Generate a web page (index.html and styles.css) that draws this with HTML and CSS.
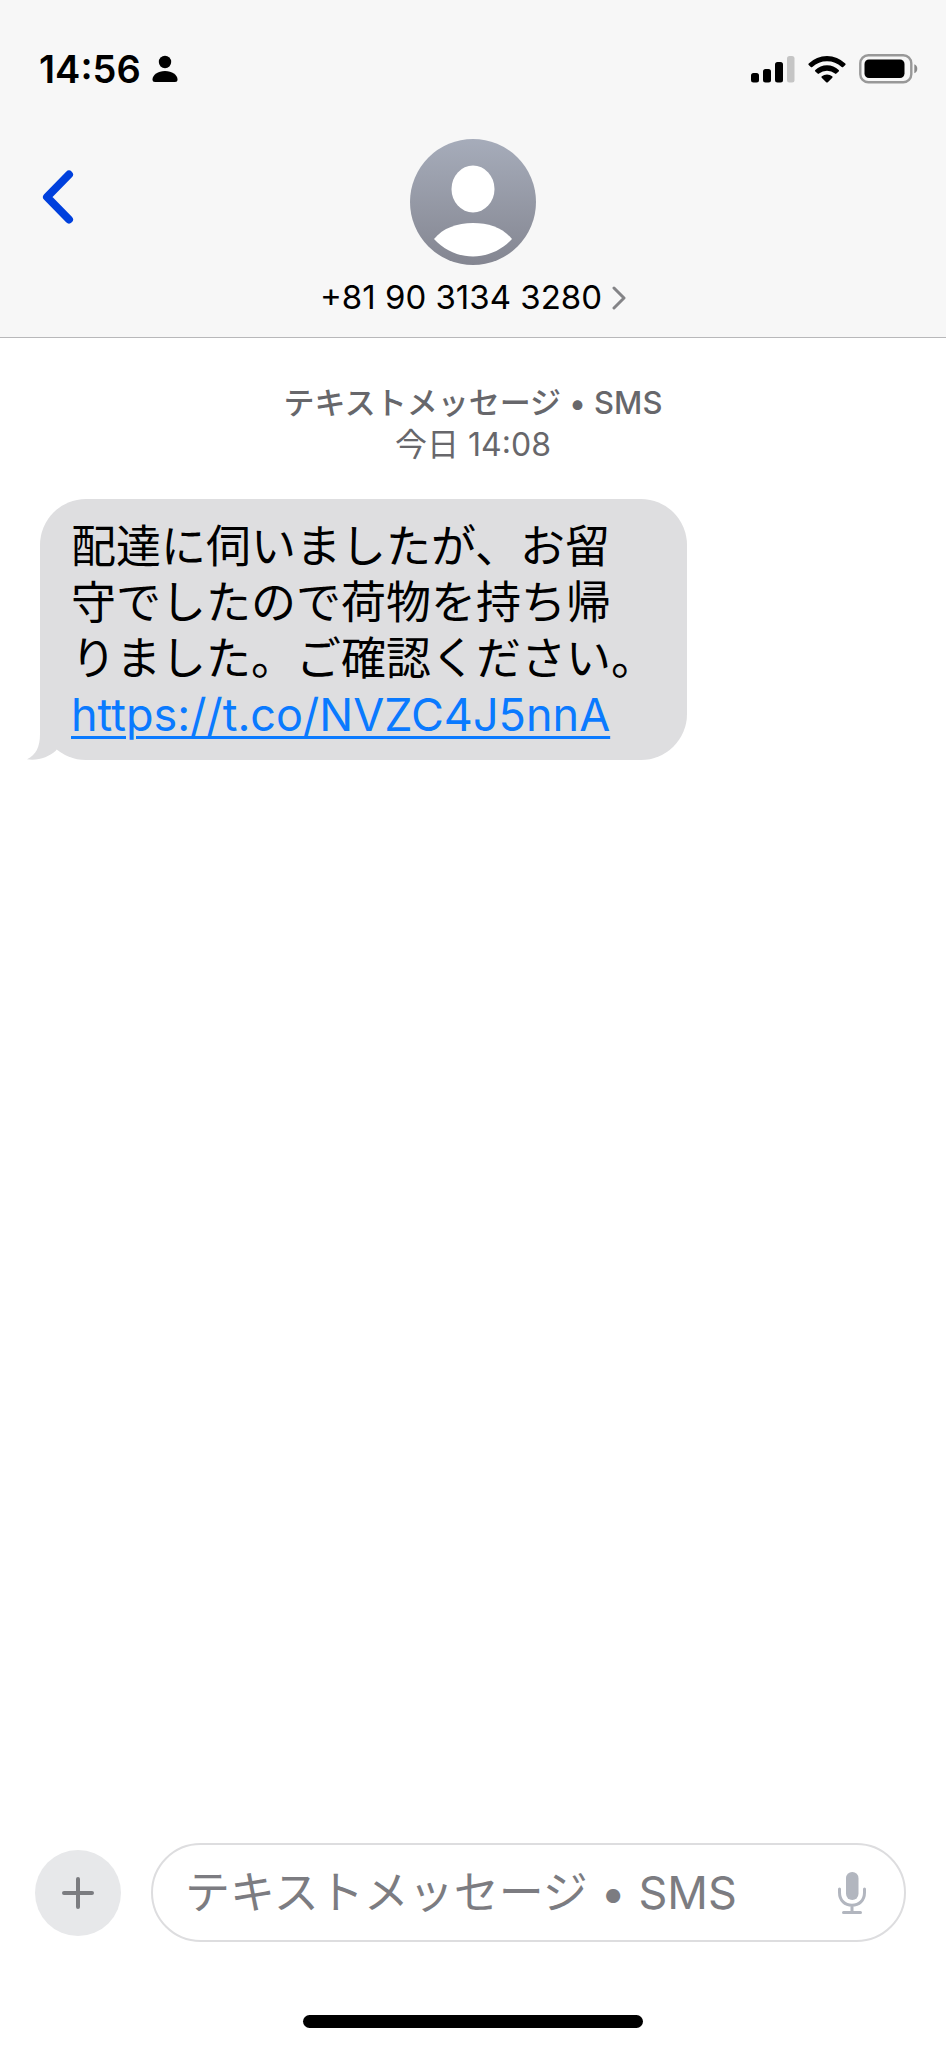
FILE: index.html
```html
<!DOCTYPE html>
<html lang="ja">
<head>
<meta charset="utf-8">
<meta name="viewport" content="width=device-width, initial-scale=1">
<title>+81 90 3134 3280</title>
<link rel="stylesheet" href="styles.css">
</head>
<body>
<div class="screen">
  <header class="header">
    <div class="status">
      <div class="status-left">
        <time class="clock">14:56</time>
        <svg class="icon-focus" width="26" height="28" viewBox="0 0 26 28" aria-hidden="true"><circle cx="13" cy="7" r="6.2"/><path d="M13 16C6 16 .5 20 .5 24.500Q.5 27 3 27H23Q25.500 27 25.500 24.500C25.500 20 20 16 13 16Z"/></svg>
      </div>
      <div class="status-right">
        <svg width="44" height="28" viewBox="0 0 44 28" aria-hidden="true"><rect x="0" y="18" width="8" height="9.500" rx="2.500"/><rect x="12" y="14" width="8" height="13.500" rx="2.500"/><rect x="24" y="7" width="8" height="20.500" rx="2.500"/><rect x="36" y="1" width="7.500" height="26.500" rx="2.500" fill="#c5c5c5"/></svg>
        <svg width="38" height="28" viewBox="0 0 38 28" aria-hidden="true"><path d="M.7 8.500A26 26 0 0 1 37.300 8.500Q38 9.300 37.300 10L35.200 12Q34.500 12.600 33.700 12A22 22 0 0 0 4.300 12Q3.500 12.600 2.800 12L.7 10Q0 9.300.7 8.500Z"/><path d="M7.300 15A17 17 0 0 1 30.700 15Q31.400 15.700 30.700 16.400L28.400 18.600Q27.700 19.200 27 18.600A12.500 12.500 0 0 0 11 18.600Q10.300 19.200 9.600 18.600L7.300 16.400Q6.600 15.700 7.300 15Z"/><path d="M13.800 21.300A8 8 0 0 1 24.200 21.300Q25 22 24.300 22.800L19.800 27.200Q19 28 18.200 27.200L13.700 22.800Q13 22 13.800 21.300Z"/></svg>
        <svg class="icon-battery" width="59" height="30" viewBox="0 0 59 30" aria-hidden="true"><rect x="1.300" y="1.300" width="51" height="27" rx="8" fill="none" stroke="#989898" stroke-width="2.400"/><rect x="5.500" y="5.500" width="40" height="18.500" rx="4.500"/><path d="M55.300 10.300Q58.300 11.500 58.300 14.800T55.300 19.300Z" fill="#8a8a8a"/></svg>
      </div>
    </div>
    <nav class="nav">
      <button class="back" type="button" aria-label="戻る"><svg width="32" height="54" viewBox="0 0 32 54" aria-hidden="true"><path d="M27 4.500 5 27 27 49.500"/></svg></button>
      <button class="contact" type="button">
        <svg width="126" height="126" viewBox="0 0 126 126" aria-hidden="true"><defs><linearGradient id="avatar-fill" x1="0" y1="0" x2="0" y2="1"><stop offset="0" stop-color="#a6acba"/><stop offset="1" stop-color="#848691"/></linearGradient></defs><circle cx="63" cy="63" r="63" fill="url(#avatar-fill)"/><ellipse cx="63" cy="50" rx="21.500" ry="23.500" fill="#fff"/><path d="M24 100C33 89 47 84 63 84S93 89 102 100C92 111 78 117.500 63 117.500S34 111 24 100Z" fill="#fff"/></svg>
        <span class="contact-name">+81 90 3134 3280 <svg width="14" height="24" viewBox="0 0 14 24" aria-hidden="true"><path d="M2 2 12 12 2 22"/></svg></span>
      </button>
    </nav>
  </header>
  <main class="thread">
    <p class="stamp"><span class="service">テキストメッセージ • SMS</span><span class="sent">今日 14:08</span></p>
    <div class="bubble">
      <svg class="tail" width="40" height="46" viewBox="0 0 40 46" aria-hidden="true"><path d="M13 0V20C13 33 9 41 0 45.300C11 47 22 43 29 36.500L40 20V0Z"/></svg>
      <p class="text">配達に伺いましたが、お留<br>守でしたので荷物を持ち帰<br>りました。ご確認ください。<br><a class="link" href="#">https://t.co/NVZC4J5nnA</a></p>
    </div>
  </main>
  <footer class="footer">
    <form class="composer">
      <button class="add" type="button" aria-label="追加"><svg width="34" height="34" viewBox="0 0 34 34" aria-hidden="true"><path d="M17 3V31M3 17H31"/></svg></button>
      <div class="field">
        <input class="input" type="text" aria-label="メッセージ" placeholder="テキストメッセージ • SMS">
        <button class="mic" type="button" aria-label="音声入力"><svg width="30" height="44" viewBox="0 0 30 44" aria-hidden="true"><rect x="9" y="1" width="12.500" height="28" rx="6.200" fill="#b2b6bf"/><path d="M2.500 18V21.500C2.500 29.500 8 34.300 15 34.300S27.500 29.500 27.500 21.500V18M15 35V41M6.500 41.500H23.500"/></svg></button>
      </div>
    </form>
    <div class="home"></div>
  </footer>
</div>
</body>
</html>
```
FILE: styles.css
```css
* {
  box-sizing: border-box;
}

body {
  margin: 0;
  background: #fff;
  color: #000;
  font-family: Inter, "Noto Sans CJK JP", sans-serif;
}

button {
  padding: 0;
  border: 0;
  background: none;
  color: inherit;
  font: inherit;
  cursor: pointer;
}

svg {
  display: block;
}

p {
  margin: 0;
}

.screen {
  display: flex;
  flex-direction: column;
  min-height: 100vh;
}

.header {
  border-bottom: 1px solid #b8b8ba;
  background: #f7f7f7;
}

.status {
  display: flex;
  align-items: center;
  justify-content: space-between;
  padding: 47px 28px 48px 39px;
}

.status-left,
.status-right {
  display: flex;
  align-items: center;
  height: 44px;
}

.status-left {
  gap: 11px;
}

.status-right {
  gap: 13px;
}

.clock {
  font-size: 38px;
  font-weight: 600;
  line-height: 44px;
}

.nav {
  display: grid;
  grid-template-columns: 1fr auto 1fr;
  align-items: start;
  padding: 0 42px 19px;
}

.back {
  justify-self: start;
  margin-top: 31px;
}

.back path {
  fill: none;
  stroke: #0040dd;
  stroke-width: 8;
  stroke-linecap: round;
  stroke-linejoin: round;
}

.contact {
  display: flex;
  flex-direction: column;
  align-items: center;
  gap: 12px;
}

.contact-name {
  display: flex;
  align-items: center;
  gap: 10px;
  font-size: 33px;
  line-height: 41px;
}

.contact-name path {
  fill: none;
  stroke: #848487;
  stroke-width: 3;
  stroke-linecap: round;
  stroke-linejoin: round;
}

.thread {
  flex: 1;
  padding: 44px 40px;
}

.stamp {
  display: flex;
  flex-direction: column;
  align-items: center;
  color: #67676b;
  font-size: 31px;
  line-height: 42px;
}

.service {
  font-weight: 500;
}

.sent {
  font-size: 32px;
}

.bubble {
  position: relative;
  width: fit-content;
  margin-top: 33px;
  padding: 20px 31px 17px;
  border-radius: 46px;
  background: #dedee0;
}

.tail {
  position: absolute;
  bottom: 0;
  left: -13px;
  fill: #dedee0;
}

.text {
  position: relative;
  font-size: 45px;
  line-height: 56px;
}

.link {
  color: #0a7aff;
  text-decoration-thickness: 3px;
  text-underline-offset: 5px;
}

.footer {
  display: flex;
  flex-direction: column;
  align-items: center;
  gap: 73px;
  padding-bottom: 20px;
}

.composer {
  display: flex;
  align-items: center;
  gap: 30px;
  width: 100%;
  padding: 0 40px 0 35px;
}

.add {
  display: grid;
  flex: none;
  place-items: center;
  width: 86px;
  height: 86px;
  border-radius: 50%;
  background: #e7e8ea;
}

.add path {
  fill: none;
  stroke: #7b7c80;
  stroke-width: 4;
  stroke-linecap: round;
}

.field {
  display: flex;
  flex: 1;
  align-items: center;
  min-width: 0;
  height: 99px;
  padding: 0 37px 0 32px;
  border: 2px solid #dddddf;
  border-radius: 50px;
}

.input {
  flex: 1;
  min-width: 0;
  height: 64px;
  padding: 0;
  border: 0;
  outline: 0;
  background: none;
  color: #000;
  font: inherit;
  font-size: 45px;
}

.input::placeholder {
  color: #7c7c81;
  opacity: 1;
}

.mic path {
  fill: none;
  stroke: #b2b6bf;
  stroke-width: 3;
  stroke-linecap: round;
}

.home {
  width: 36%;
  height: 13px;
  border-radius: 7px;
  background: #000;
}
```
